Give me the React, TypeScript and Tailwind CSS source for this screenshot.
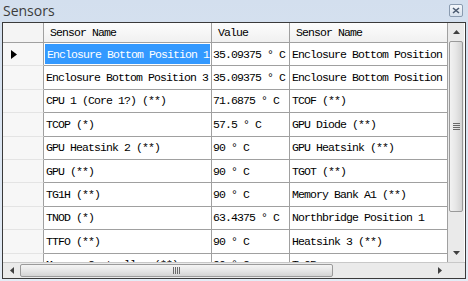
import React from "react";

const rows = [
  ["Enclosure Bottom Position 1", "35.09375 ° C", "Enclosure Bottom Position"],
  ["Enclosure Bottom Position 3", "35.09375 ° C", "Enclosure Bottom Position"],
  ["CPU 1 (Core 1?) (**)", "71.6875 ° C", "TCOF (**)"],
  ["TCOP (*)", "57.5 ° C", "GPU Diode (**)"],
  ["GPU Heatsink 2 (**)", "90 ° C", "GPU Heatsink (**)"],
  ["GPU (**)", "90 ° C", "TGOT (**)"],
  ["TG1H (**)", "90 ° C", "Memory Bank A1 (**)"],
  ["TNOD (*)", "63.4375 ° C", "Northbridge Position 1"],
  ["TTFO (**)", "90 ° C", "Heatsink 3 (**)"],
  ["Memory Controller (**)", "90 ° C", "T-OP"],
];

const mono = "font-['Liberation_Mono',monospace] text-[11.5px] tracking-[-0.9px] text-black";

const App = () => {
  return (
    <div className="w-[468px] h-[281px] overflow-hidden bg-gradient-to-b from-[#d3dfee] to-[#e4ecf6] flex flex-col">
      {/* title bar */}
      <div className="h-[22px] shrink-0 flex items-center justify-between pl-[3px] pr-[5px]">
        <span className="font-['Open_Sans',sans-serif] text-[14px] text-[#3c3c3c] leading-none pb-[1px]">
          Sensors
        </span>
        <div className="w-[14px] h-[13px] mb-[2px] border border-[#8a9bb0] rounded-[2px] bg-gradient-to-b from-[#f4f7fb] to-[#d8e2ee] flex items-center justify-center">
          <svg width="8" height="7" viewBox="0 0 8 7">
            <path d="M1 1 L7 6 M7 1 L1 6" stroke="#4a5a70" strokeWidth="1.6" />
          </svg>
        </div>
      </div>

      {/* grid */}
      <div className="ml-[2px] mr-[2px] h-[257px] border border-[#3a3a3a] bg-white flex flex-col">
        <div className="flex flex-1 min-h-0">
          <div className="w-[444px] overflow-hidden flex flex-col">
            {/* header */}
            <div className="flex h-[20px] shrink-0 border-b border-[#a0a0a0] bg-gradient-to-b from-[#fdfdfd] to-[#f0f0f0]">
              <div className="w-[41px] shrink-0 border-r border-[#a0a0a0] bg-[#f4f4f4]" />
              <div className={`w-[168px] shrink-0 border-r border-[#a0a0a0] pl-[6px] flex items-center ${mono}`}>
                Sensor Name
              </div>
              <div className={`w-[78px] shrink-0 border-r border-[#a0a0a0] pl-[6px] flex items-center ${mono}`}>
                Value
              </div>
              <div className={`w-[160px] shrink-0 pl-[6px] flex items-center whitespace-nowrap ${mono}`}>
                Sensor Name
              </div>
            </div>
            {rows.map((r, i) => (
              <div key={i} className="flex h-[23.4px] shrink-0">
                <div className="w-[41px] shrink-0 border-r border-[#a0a0a0] border-b border-b-[#e4e4e4] bg-[#f7f7f7] flex items-center pl-[8px]">
                  {i === 0 && (
                    <svg width="6" height="9" viewBox="0 0 6 9">
                      <path d="M0 0 L6 4.5 L0 9 Z" fill="#000" />
                    </svg>
                  )}
                </div>
                <div className="w-[168px] shrink-0 border-r border-b border-[#a0a0a0] flex">
                  <div
                    className={`flex-1 flex items-center pl-[2px] whitespace-nowrap overflow-hidden ${mono} ${
                      i === 0 ? "bg-[#3399ff] !text-white m-[1px] pl-[1px]" : ""
                    }`}
                  >
                    {r[0]}
                  </div>
                </div>
                <div className={`w-[78px] shrink-0 border-r border-b border-[#a0a0a0] pl-[1px] flex items-center whitespace-nowrap overflow-hidden ${mono}`}>
                  {r[1]}
                </div>
                <div className={`w-[160px] shrink-0 border-b border-[#a0a0a0] pl-[2px] flex items-center whitespace-nowrap overflow-hidden ${mono}`}>
                  {r[2]}
                </div>
              </div>
            ))}
          </div>
          {/* vertical scrollbar */}
          <div className="w-[17px] shrink-0 bg-[#eaeaea] flex flex-col border-l border-[#a0a0a0]">
            <div className="h-[18px] flex items-center justify-center">
              <svg width="7" height="4" viewBox="0 0 7 4">
                <path d="M0 4 L3.5 0 L7 4 Z" fill="#404040" />
              </svg>
            </div>
            <div className="h-[171px] mx-[1px] rounded-[2px] border border-[#9a9a9a] bg-gradient-to-r from-[#f2f2f2] via-[#e6e6e6] to-[#d2d2d2] flex items-center justify-center">
              <div className="flex flex-col gap-[1px]">
                <div className="w-[7px] h-[1px] bg-[#6a6a6a]" />
                <div className="w-[7px] h-[1px] bg-[#6a6a6a]" />
                <div className="w-[7px] h-[1px] bg-[#6a6a6a]" />
                <div className="w-[7px] h-[1px] bg-[#6a6a6a]" />
              </div>
            </div>
            <div className="flex-1" />
            <div className="h-[18px] flex items-center justify-center">
              <svg width="7" height="4" viewBox="0 0 7 4">
                <path d="M0 0 L3.5 4 L7 0 Z" fill="#404040" />
              </svg>
            </div>
          </div>
        </div>
        {/* horizontal scrollbar */}
        <div className="h-[16px] shrink-0 flex bg-[#eaeaea] border-t border-[#c8c8c8]">
          <div className="w-[17px] flex items-center justify-center">
            <svg width="4" height="7" viewBox="0 0 4 7">
              <path d="M4 0 L0 3.5 L4 7 Z" fill="#404040" />
            </svg>
          </div>
          <div className="w-[313px] my-[1px] rounded-[2px] border border-[#9a9a9a] bg-gradient-to-b from-[#f4f4f4] via-[#e6e6e6] to-[#d4d4d4] flex items-center justify-center">
            <div className="flex gap-[1px]">
              <div className="w-[1px] h-[7px] bg-[#6a6a6a]" />
              <div className="w-[1px] h-[7px] bg-[#6a6a6a]" />
              <div className="w-[1px] h-[7px] bg-[#6a6a6a]" />
              <div className="w-[1px] h-[7px] bg-[#6a6a6a]" />
            </div>
          </div>
          <div className="flex-1" />
          <div className="w-[17px] flex items-center justify-center">
            <svg width="4" height="7" viewBox="0 0 4 7">
              <path d="M0 0 L4 3.5 L0 7 Z" fill="#404040" />
            </svg>
          </div>
          <div className="w-[17px] bg-[#eaeaea]" />
        </div>
      </div>
    </div>
  );
};

export default App;
